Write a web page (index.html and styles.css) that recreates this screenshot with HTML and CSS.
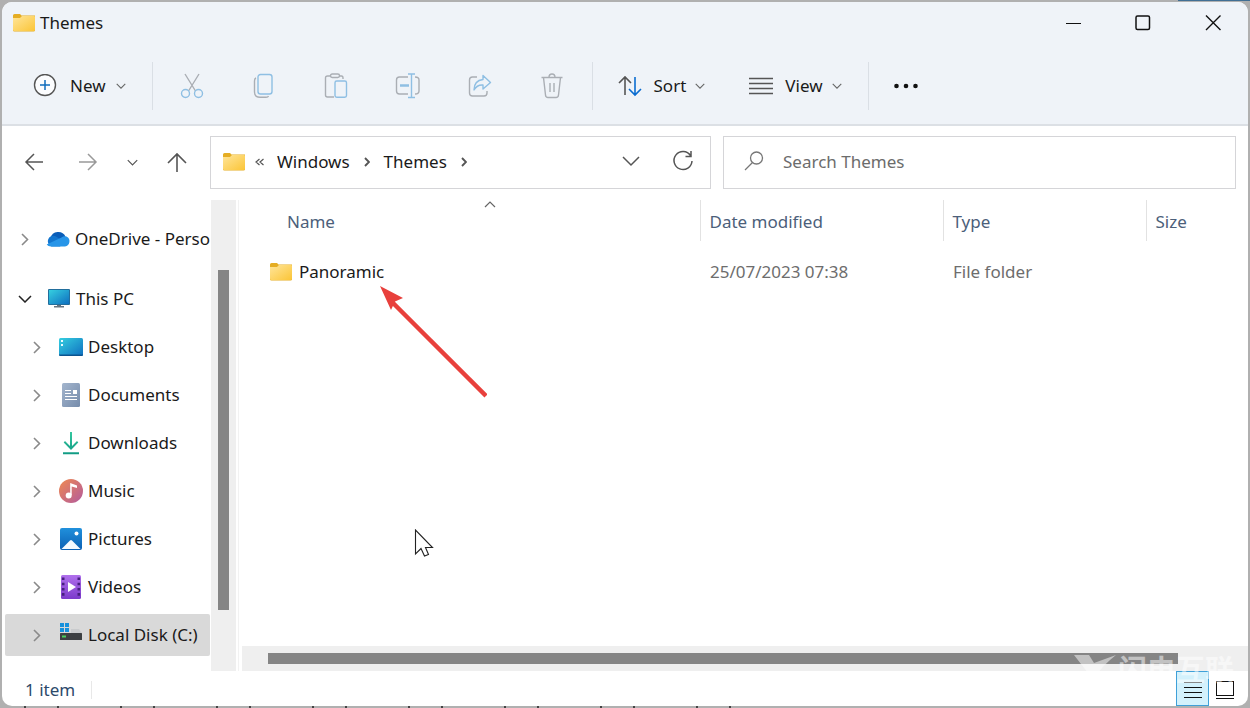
FILE: index.html
```html
<!DOCTYPE html>
<html lang="en">
<head>
<meta charset="utf-8">
<title>Themes</title>
<link rel="stylesheet" href="styles.css">
</head>
<body>
<svg width="0" height="0" class="defs" aria-hidden="true">
  <defs>
    <linearGradient id="gFolder" x1="0" y1="0" x2="1" y2="1"><stop offset="0" stop-color="#ffe59a"/><stop offset="1" stop-color="#fbc537"/></linearGradient>
    <linearGradient id="gScreen" x1="0" y1="0" x2="1" y2="1"><stop offset="0" stop-color="#35cfe0"/><stop offset="1" stop-color="#0f6fc0"/></linearGradient>
    <linearGradient id="gDoc" x1="0" y1="0" x2="1" y2="1"><stop offset="0" stop-color="#a3b5cd"/><stop offset="1" stop-color="#768cab"/></linearGradient>
    <linearGradient id="gMusic" x1="0" y1="0" x2="1" y2="1"><stop offset="0" stop-color="#f08a50"/><stop offset="1" stop-color="#b25a9e"/></linearGradient>
    <linearGradient id="gPic" x1="0" y1="0" x2="0" y2="1"><stop offset="0" stop-color="#2090dc"/><stop offset="1" stop-color="#0b60b4"/></linearGradient>
    <linearGradient id="gVid" x1="0" y1="0" x2="0" y2="1"><stop offset="0" stop-color="#b070ec"/><stop offset="1" stop-color="#7c3acb"/></linearGradient>
    <linearGradient id="gDown" x1="0" y1="0" x2="0" y2="1"><stop offset="0" stop-color="#35c79f"/><stop offset="1" stop-color="#119b84"/></linearGradient>
    <symbol id="folder" viewBox="0 0 22 18"><path d="M0 1.500Q0 0 1.500 0H7L8.500 1.500H22V16Q22 17.500 20.500 17.500H1.500Q0 17.500 0 16Z" fill="#e5ad23"/><path d="M0 4H7L9 2H21Q22 2 22 3V15.500Q22 17 20.500 17H1.500Q0 17 0 15.500Z" fill="url(#gFolder)"/></symbol>
    <symbol id="right" viewBox="0 0 8 13"><path d="M1 1L6.500 6.500L1 12" fill="none" stroke="currentColor" stroke-width="1.600"/></symbol>
    <symbol id="crumb" viewBox="0 0 6 10"><path d="M1 1L5 5L1 9" fill="none" stroke="currentColor" stroke-width="1.900"/></symbol>
    <symbol id="down" viewBox="0 0 14 8"><path d="M1 1L7 7L13 1" fill="none" stroke="currentColor" stroke-width="1.500"/></symbol>
  </defs>
</svg>

<main class="window">
  <header class="titlebar">
    <svg class="folder"><use href="#folder"/></svg>
    <h1 class="title">Themes</h1>
    <div class="captions">
      <button class="caption" aria-label="Minimize"><svg width="16" height="16"><path d="M1 8.500H16" stroke="#111"/></svg></button>
      <button class="caption" aria-label="Maximize"><svg width="16" height="16"><rect x="1" y="1" width="13.500" height="13.500" rx="1.500" fill="none" stroke="#111" stroke-width="1.500"/></svg></button>
      <button class="caption" aria-label="Close"><svg width="16" height="16"><path d="M1 .5L15.500 15M15.500 .5L1 15" stroke="#111" stroke-width="1.400"/></svg></button>
    </div>
  </header>

  <div class="toolbar">
    <button class="tool new"><svg width="24" height="24" fill="none"><circle cx="12" cy="11" r="10.500" stroke="#555" stroke-width="1.400" fill="#fbfcfe"/><path d="M12 6V16M7 11H17" stroke="#0f6cbd" stroke-width="1.500"/></svg><span>New</span><svg class="mini"><use href="#down"/></svg></button>
    <span class="rule"></span>
    <div class="actions">
      <button class="tool icon" aria-label="Cut" disabled><svg width="24" height="26" fill="none" stroke-width="1.400"><path d="M5 1L15.500 18M19 1L8.500 18" stroke="#aaaeb4"/><circle cx="5.500" cy="20.500" r="4" stroke="#8fbfe3"/><circle cx="18.500" cy="20.500" r="4" stroke="#8fbfe3"/></svg></button>
      <button class="tool icon" aria-label="Copy" disabled><svg width="24" height="26" fill="none" stroke-width="1.400"><path d="M4 5Q2.500 5.500 2.500 8V19Q2.500 24.300 8 24.300H14Q16 24.300 16.500 23" stroke="#aaaeb4"/><rect x="6" y="1.500" width="14" height="19.500" rx="2.500" stroke="#8fbfe3"/></svg></button>
      <button class="tool icon" aria-label="Paste" disabled><svg width="24" height="26" fill="none" stroke-width="1.400"><path d="M7 3H3.500Q1.500 3 1.500 5V22Q1.500 24 3.500 24H10M15 3H17.500Q19 3 19 5V6" stroke="#aaaeb4"/><rect x="6.500" y="1" width="9" height="3.500" rx="1.700" stroke="#aaaeb4"/><rect x="11" y="8" width="11.500" height="16.300" rx="1.700" stroke="#8fbfe3"/></svg></button>
      <button class="tool icon" aria-label="Rename" disabled><svg width="26" height="26" fill="none" stroke-width="1.400"><path d="M13 4H4.500Q1.500 4 1.500 7V18Q1.500 21 4.500 21H13M20 4Q24 4 24 7V18Q24 21 20 21" stroke="#aaaeb4"/><path d="M16.500 1V24.500M13 1H20M13 24.500H20" stroke="#8fbfe3"/><path d="M5 12.500H14" stroke="#8fbfe3" stroke-width="2.600"/></svg></button>
      <button class="tool icon" aria-label="Share" disabled><svg width="24" height="26" fill="none" stroke-width="1.400" stroke-linejoin="round"><path d="M9 4H4.500Q1.500 4 1.500 7V20Q1.500 23 4.500 23H16Q19 23 19 20V18" stroke="#aaaeb4"/><path d="M15 2.500L22.500 9.500L15 16V12Q9 11.500 6 17Q6 7.500 15 6.500Z" stroke="#8fbfe3"/></svg></button>
      <button class="tool icon" aria-label="Delete" disabled><svg width="24" height="26" fill="none" stroke="#aaaeb4" stroke-width="1.400"><path d="M1.500 4.500H22.500M3.500 4.500L5.500 22Q5.700 24.500 8 24.500H16Q18.300 24.500 18.500 22L20.500 4.500M9 4.500Q9 1 12 1T15 4.500M10 10V19M14 10V19"/></svg></button>
    </div>
    <span class="rule"></span>
    <button class="tool sort"><svg width="24" height="22" fill="none" stroke-width="1.600"><path d="M7 20V2M1 8L7 2L13 8" stroke="#555"/><path d="M17 2V20M11 14L17 20L23 14" stroke="#0a6cd0"/></svg><span>Sort</span><svg class="mini"><use href="#down"/></svg></button>
    <button class="tool view"><svg width="24" height="18"><path d="M0 1.500H24M0 6.500H24M0 11.500H24M0 16.500H24" stroke="#555" stroke-width="1.300"/></svg><span>View</span><svg class="mini"><use href="#down"/></svg></button>
    <span class="rule"></span>
    <button class="tool more" aria-label="See more"><svg width="24" height="6" fill="#111"><circle cx="2.500" cy="3" r="2.300"/><circle cx="12" cy="3" r="2.300"/><circle cx="21.500" cy="3" r="2.300"/></svg></button>
  </div>

  <div class="navbar">
    <div class="navkeys">
      <button aria-label="Back"><svg width="20" height="18" fill="none" stroke="#555" stroke-width="1.500"><path d="M19 9H2M10 1L2 9L10 17"/></svg></button>
      <button aria-label="Forward"><svg width="20" height="18" fill="none" stroke="#999" stroke-width="1.500"><path d="M1 9H18M10 1L18 9L10 17"/></svg></button>
      <button aria-label="Recent locations"><svg class="recent"><use href="#down"/></svg></button>
      <button aria-label="Up"><svg width="20" height="20" fill="none" stroke="#555" stroke-width="1.600"><path d="M10 20V2M1 11L10 2L19 11"/></svg></button>
    </div>
    <nav class="address" aria-label="Address">
      <svg class="folder"><use href="#folder"/></svg>
      <svg class="laquo" width="10" height="8" fill="none" stroke="#555" stroke-width="1.200"><path d="M4.500 1L1 4L4.500 7M8.500 1L5 4L8.500 7"/></svg>
      <a href="#windows">Windows</a>
      <svg class="sep"><use href="#crumb"/></svg>
      <a href="#themes">Themes</a>
      <svg class="sep"><use href="#crumb"/></svg>
      <button class="history" aria-label="Previous locations"><svg width="18" height="12" fill="none" stroke="#555" stroke-width="1.500"><path d="M1 1L9 9L17 1"/></svg></button>
      <button class="refresh" aria-label="Refresh"><svg width="22" height="24" fill="none" stroke="#555" stroke-width="1.500"><path d="M18.500 5.500A9 9 0 1 0 20 11M19 1V6.500H13.500"/></svg></button>
    </nav>
    <label class="search"><svg width="20" height="22" fill="none" stroke="#777" stroke-width="1.300"><circle cx="12.500" cy="7" r="6"/><path d="M8.500 11.500L1 19"/></svg><input type="search" placeholder="Search Themes" aria-label="Search Themes"></label>
  </div>

  <div class="content">
    <aside class="sidebar">
      <ul class="tree">
        <li class="node root onedrive"><button aria-label="Expand OneDrive"><svg class="arrow"><use href="#right"/></svg></button><svg class="pic" viewBox="0 0 24 24"><path d="M4.500 11A8 8 0 0 1 19.500 9.500L15 15L6 14Z" fill="#0a5db8"/><path d="M5.500 19.500A5.500 5.500 0 1 1 10 9.500L19 15L14 19.500Z" fill="#1275ce"/><path d="M5 19.500Q2 19.500 .7 17.500L15.500 10.500Q18 8.500 20.500 9.500A5.300 5.300 0 0 1 19 19.500Z" fill="#2795e8"/></svg><span>OneDrive - Perso</span></li>
        <li class="node root"><button aria-label="Collapse This PC"><svg class="open"><use href="#down"/></svg></button><svg class="pic" viewBox="0 0 24 24"><rect x="1" y="2" width="22" height="16" rx="1" fill="#226e9c"/><rect x="2" y="3" width="20" height="14" fill="url(#gScreen)"/><path d="M10 18H14V19H10ZM7 19H17V20.500H7Z" fill="#667480"/></svg><span>This PC</span></li>
        <li class="node"><button aria-label="Expand Desktop"><svg class="arrow"><use href="#right"/></svg></button><svg class="pic" viewBox="0 0 24 24"><rect y="3" width="24" height="18" rx="1.500" fill="url(#gScreen)"/><path d="M0 19.500H24Q24 21 22.500 21H1.500Q0 21 0 19.500Z" fill="#0c548f"/><path d="M2 5H4V7H2ZM2 9H4V11H2Z" fill="#e9fbff"/></svg><span>Desktop</span></li>
        <li class="node"><button aria-label="Expand Documents"><svg class="arrow"><use href="#right"/></svg></button><svg class="pic" viewBox="0 0 24 24"><rect x="3" width="18" height="24" rx="1.500" fill="url(#gDoc)"/><path d="M6 7.500H12M6 10.500H12M6 13.500H18M6 16.500H18" stroke="#fff" stroke-width="1.200"/><path d="M14 7H18V11H14Z" fill="#fff"/></svg><span>Documents</span></li>
        <li class="node"><button aria-label="Expand Downloads"><svg class="arrow"><use href="#right"/></svg></button><svg class="pic" viewBox="0 0 24 24"><path d="M11 1H13V15L18 10L19.300 11.500L12 19L4.700 11.500L6 10L11 15ZM4 21.300H20V23.200H4Z" fill="url(#gDown)"/></svg><span>Downloads</span></li>
        <li class="node"><button aria-label="Expand Music"><svg class="arrow"><use href="#right"/></svg></button><svg class="pic" viewBox="0 0 24 24"><circle cx="12" cy="12" r="12" fill="url(#gMusic)"/><circle cx="9.700" cy="16.500" r="3" fill="#fff"/><path d="M11.200 16V4L18 6.500V9L12.700 7.500V16Z" fill="#fff"/></svg><span>Music</span></li>
        <li class="node"><button aria-label="Expand Pictures"><svg class="arrow"><use href="#right"/></svg></button><svg class="pic" viewBox="0 0 24 24"><rect x="1" y="1" width="22" height="22" rx="2" fill="url(#gPic)"/><path d="M2.500 22L11 13.500Q12 12.500 13 13.500L21.500 22Z" fill="#f4faff"/><circle cx="17.500" cy="6.500" r="2" fill="#fff"/></svg><span>Pictures</span></li>
        <li class="node"><button aria-label="Expand Videos"><svg class="arrow"><use href="#right"/></svg></button><svg class="pic" viewBox="0 0 24 24"><rect x="2" width="20" height="24" rx="1.500" fill="url(#gVid)"/><path d="M4.200 2.500V22M19.800 2.500V22" stroke="#482080" stroke-width="2.600" stroke-dasharray="2.600 2.600"/><path d="M9 7L17 12L9 17Z" fill="#fff"/></svg><span>Videos</span></li>
        <li class="node selected"><button aria-label="Expand Local Disk"><svg class="arrow"><use href="#right"/></svg></button><svg class="pic" viewBox="0 0 24 24"><path d="M1 0H5V4H1ZM6 0H10V4H6ZM1 5H5V9H1ZM6 5H10V9H6Z" fill="#1791dc"/><path d="M12 6H20L23 10H12Z" fill="#c9cbcd"/><rect x="1" y="10" width="22" height="7" rx=".5" fill="#3c3f42"/><rect x="3" y="12.500" width="4" height="2" fill="#4bd05c"/></svg><span>Local Disk (C:)</span></li>
      </ul>
    </aside>
    <div class="vscroll"><div class="vthumb"></div></div>
    <section class="files">
      <table>
        <colgroup><col><col class="c-date"><col class="c-type"><col class="c-size"></colgroup>
        <thead><tr><th>Name<svg class="asc" width="12" height="7" fill="none" stroke="#666" stroke-width="1.200"><path d="M1 6L6 1L11 6"/></svg></th><th>Date modified</th><th>Type</th><th>Size</th></tr></thead>
        <tbody><tr><td class="name"><span class="entry"><svg class="folder"><use href="#folder"/></svg>Panoramic</span></td><td>25/07/2023 07:38</td><td>File folder</td><td></td></tr></tbody>
      </table>
      <div class="hscroll"><div class="hthumb"></div></div>
    </section>
  </div>

  <footer class="status">
    <span class="count">1 item</span>
    <div class="modes">
      <button class="mode active" aria-label="Details view"><svg width="18" height="18"><path d="M0 1.500H18M0 6.500H18M0 11.500H18M0 16.500H18" stroke="#111"/></svg></button>
      <button class="mode" aria-label="Large icons view"><svg width="18" height="18"><rect x=".5" y=".5" width="17" height="14" fill="none" stroke="#111"/><path d="M0 17.500H18" stroke="#111"/></svg></button>
    </div>
  </footer>

  <svg class="pointer-arrow" width="108" height="112"><path d="M10 13L107 110" stroke="#e8403c" stroke-width="4.500"/><path d="M1 0L24 12L16 15.500L12 24Z" fill="#e8403c"/></svg>
  <svg class="cursor" width="20" height="30"><path d="M1.500 1V25L7 19.500L10.500 27L14.500 25.500L11.500 18.500H18.500Z" fill="#fff" stroke="#222" stroke-width="1.100"/></svg>
  <div class="watermark"><svg width="44" height="30"><path d="M0 2H15L20 10L42 2Q28 13 23 22L38 20H22L14 20Z" fill="#fff"/></svg><span>闪电互联</span></div>
</main>
</body>
</html>
```
FILE: styles.css
```css
* { box-sizing: border-box; }
body {
  margin: 0;
  height: 100vh;
  padding: 2px;
  background:
    linear-gradient(#416f94, #416f94) right top / 72px 1px no-repeat,
    repeating-linear-gradient(90deg, transparent 0 24px, #444 24px 26px, transparent 26px 57px, #444 57px 59px, transparent 59px 96px) left bottom / 746px 2px no-repeat,
    #b0b0b0;
  font: 17px/24px "Noto Sans", "Noto Sans CJK SC", sans-serif;
  color: #1a1a1a;
}
button { margin: 0; padding: 0; border: 0; background: none; font: inherit; color: inherit; }
svg { display: block; flex: none; }
a { color: inherit; text-decoration: none; }
.defs { position: absolute; }
.window {
  position: relative;
  display: flex;
  flex-direction: column;
  height: 100%;
  background: #fff;
  border-radius: 10px;
  overflow: hidden;
}
.folder { width: 22px; height: 20px; }

.titlebar { display: flex; align-items: center; height: 42px; padding-left: 11px; gap: 5px; background: #eff3f8; }
.title { margin: 0; font-size: 17px; font-weight: 400; }
.captions { display: flex; margin-left: auto; }
.caption { display: flex; align-items: center; justify-content: center; width: 70px; height: 42px; }

.toolbar { display: flex; align-items: center; height: 82px; padding: 4px 31px 0; background: #eff3f8; border-bottom: 2px solid #dce0e5; }
.tool { display: flex; align-items: center; }
.mini { width: 10px; height: 6px; color: #666; }
.new { gap: 13px; margin-right: 26px; }
.new .mini, .sort .mini, .view .mini { margin-left: -3px; }
.rule { width: 1px; height: 48px; background: #dadfe5; }
.actions { display: flex; padding: 0 4px 0 3px; }
.icon { justify-content: center; width: 72px; height: 48px; }
.sort { gap: 12px; margin-left: 25px; }
.view { gap: 12px; margin: 0 26px 0 44px; }
.more { margin-left: 25px; }

.navbar { display: flex; align-items: center; height: 74px; padding: 0 12px 2px 0; }
.navkeys { display: flex; align-items: center; gap: 32px; width: 208px; padding-left: 22px; }
.recent { width: 11px; height: 7px; color: #555; }
.navkeys button:nth-child(n+2) { margin-left: 2px; }
.navkeys button:nth-child(n+3) { margin-left: -3px; }
.address { display: flex; align-items: center; flex: 1 1 0; height: 53px; padding: 0 16px 0 12px; margin-right: 12px; border: 1px solid #d5d5d8; }
.laquo { margin: 0 12px 0 10px; }
.sep { width: 6px; height: 10px; margin: 0 14px; color: #555; }
.history { margin-left: auto; }
.refresh { margin-left: 32px; }
.search { display: flex; align-items: center; width: 50%; max-width: calc(50% - 104px); gap: 19px; height: 53px; padding: 0 20px; border: 1px solid #d5d5d8; }
.search input { flex: 1; min-width: 0; padding: 0; border: 0; outline: 0; background: none; font: inherit; }
.search input::placeholder { color: #6c6c6c; opacity: 1; }

.content { display: flex; flex: 1; min-height: 0; }
.sidebar { width: 209px; padding: 18px 1px 0 3px; overflow: hidden; }
.tree { margin: 0; padding: 0; list-style: none; }
.node { display: flex; align-items: center; gap: 5px; height: 42px; margin-bottom: 6px; padding-left: 26px; border-radius: 2px; white-space: nowrap; }
.node button { display: flex; align-items: center; width: 23px; height: 24px; }
.node.root { padding-left: 14px; }
.node.onedrive { margin-bottom: 18px; }
.selected { background: #d9d9d9; }
.pic { width: 24px; height: 24px; }
.arrow { width: 8px; height: 13px; color: #8a8a8a; margin-left: 2px; }
.open { width: 14px; height: 8px; color: #222; margin-left: -1px; }
.vscroll { width: 25px; margin-right: 2px; padding-top: 70px; background: #efefef; }
.vthumb { width: 11px; height: 340px; margin: 0 auto; background: #858585; }
.files { display: flex; flex-direction: column; flex: 1; min-width: 0; border-left: 1px solid #f2f2f2; padding-left: 3px; }
table { width: 100%; table-layout: fixed; border-collapse: collapse; }
.c-date { width: 243px; }
.c-type { width: 203px; }
.c-size { width: 102px; }
th { position: relative; height: 41px; padding: 3px 0 0 9px; text-align: left; font-weight: 400; color: #4c607a; border-left: 1px solid #e2e2e2; }
th:first-child { padding-left: 45px; border-left: 0; }
.asc { position: absolute; left: 242px; top: 1px; }
td { height: 62px; padding: 0 0 0 10px; color: #6d6d6d; }
td.name { padding-left: 28px; color: #1a1a1a; }
.entry { display: flex; align-items: center; gap: 7px; }
.hscroll { margin-top: auto; padding: 7px 70px 7px 26px; background: #efefef; }
.hthumb { height: 11px; background: #858585; }

.status { display: flex; align-items: center; height: 35px; padding: 2px 8px 0 23px; color: #2d4a6b; }
.count { padding-right: 16px; border-right: 1px solid #e8e8e8; line-height: 18px; }
.modes { display: flex; align-items: center; align-self: flex-end; margin-left: auto; }
.mode { display: flex; align-items: center; justify-content: center; width: 31px; height: 35px; padding-top: 2px; border: 1px solid transparent; }
.mode.active { width: 33px; background: #d3f1fc; border-color: #3fa0d8; }

.pointer-arrow { position: absolute; left: 377px; top: 284px; }
.cursor { position: absolute; left: 412px; top: 527px; }
.watermark { position: absolute; right: 14px; bottom: 22px; display: flex; align-items: center; color: #fff; font: 700 29px/32px "Noto Sans CJK SC", sans-serif; opacity: .5; pointer-events: none; }
```
